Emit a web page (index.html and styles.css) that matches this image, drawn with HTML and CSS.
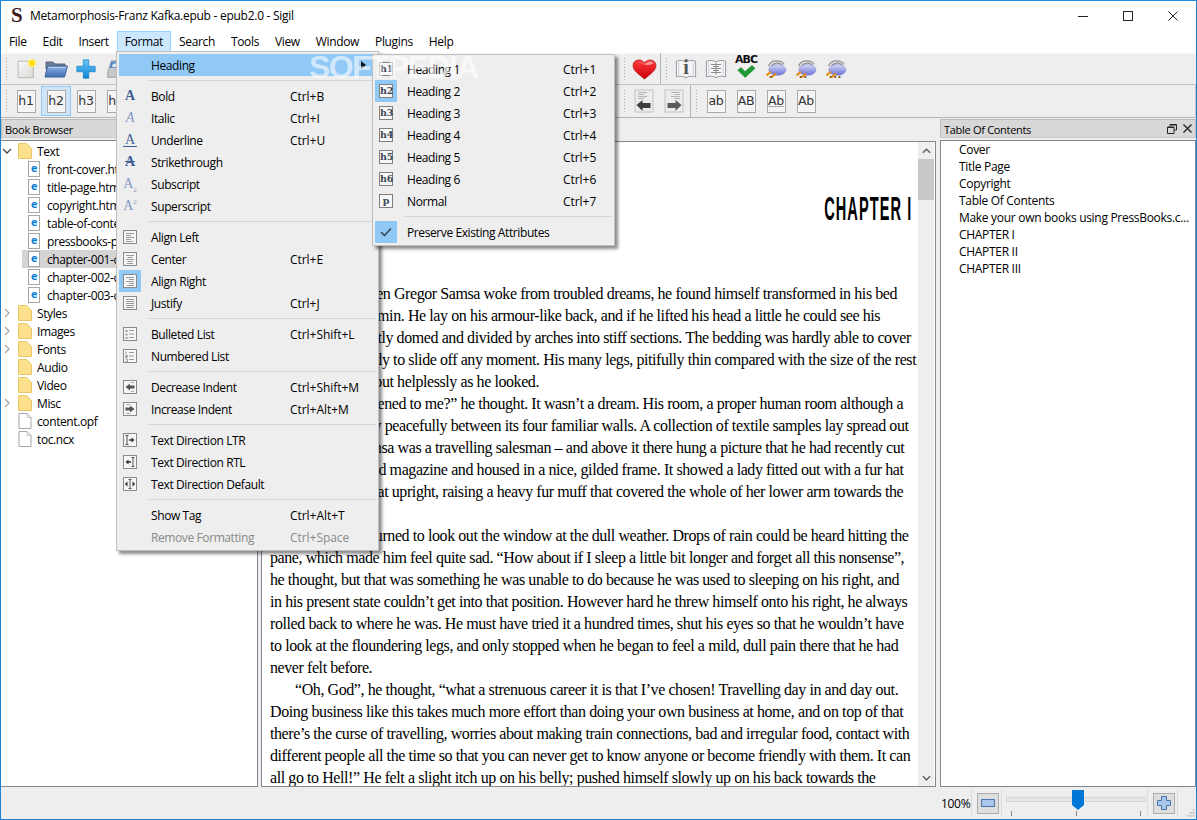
FILE: index.html
```html
<!DOCTYPE html>
<html lang="en">
<head>
    <meta charset="UTF-8">
    <title>Metamorphosis-Franz Kafka.epub - epub2.0 - Sigil</title>
    <link rel="stylesheet" href="styles.css">
</head>
<body>
<svg class="svg-defs" width="0" height="0">
    <defs>
        <linearGradient id="g-page" x1="0" y1="0" x2="1" y2="1"><stop offset="0" stop-color="#fbfbfb"/><stop offset="1" stop-color="#d8d8d4"/></linearGradient>
        <linearGradient id="g-folder" x1="0" y1="0" x2="0" y2="1"><stop offset="0" stop-color="#8fb2e2"/><stop offset="1" stop-color="#3f6fb5"/></linearGradient>
        <linearGradient id="g-plus" x1="0" y1="0" x2="0" y2="1"><stop offset="0" stop-color="#6cc6f5"/><stop offset="1" stop-color="#0a86d8"/></linearGradient>
        <linearGradient id="g-heart" x1="0" y1="0" x2="0" y2="1"><stop offset="0" stop-color="#ff3a3a"/><stop offset="1" stop-color="#c80008"/></linearGradient>
        <linearGradient id="g-oval" x1="0" y1="0" x2="0" y2="1"><stop offset="0" stop-color="#d6daf8"/><stop offset="1" stop-color="#6a70d8"/></linearGradient>

        <symbol id="box" viewBox="0 0 16 16"><rect x="1.5" y="1.5" width="13" height="13" fill="#f6f6f6" stroke="#8a8a8a"/></symbol>
        <symbol id="al-left" viewBox="0 0 16 16"><use href="#box"/><path d="M4 4.5h8M4 6.5h5M4 8.5h8M4 10.5h5M4 12.5h7" stroke="#9a9a9a" fill="none"/></symbol>
        <symbol id="al-center" viewBox="0 0 16 16"><use href="#box"/><path d="M4 4.5h8M5.5 6.5h5M4 8.5h8M5.5 10.5h5M5 12.5h6" stroke="#9a9a9a" fill="none"/></symbol>
        <symbol id="al-right" viewBox="0 0 16 16"><use href="#box"/><path d="M4 4.5h8M7 6.5h5M4 8.5h8M7 10.5h5M5 12.5h7" stroke="#9a9a9a" fill="none"/></symbol>
        <symbol id="al-just" viewBox="0 0 16 16"><use href="#box"/><path d="M4 4.5h8M4 6.5h8M4 8.5h8M4 10.5h8M4 12.5h8" stroke="#9a9a9a" fill="none"/></symbol>
        <symbol id="li-bullet" viewBox="0 0 16 16"><use href="#box"/><path d="M3.5 4h2v2h-2zM3.5 7.5h2v2h-2zM3.5 11h2v2h-2z" fill="#9a9a9a"/><path d="M7 4.5h5M7 8h5M7 11.5h5" stroke="#9a9a9a" fill="none"/></symbol>
        <symbol id="li-number" viewBox="0 0 16 16"><use href="#box"/><path d="M4 3.5v3M3.5 7.5h2v1h-2v1h2M3.5 11h2v2.5h-2" stroke="#8a8a8a" fill="none" stroke-width=".8"/><path d="M7 4.5h5M7 8h5M7 11.5h5" stroke="#9a9a9a" fill="none"/></symbol>
        <symbol id="ind-dec" viewBox="0 0 16 16"><use href="#box"/><path d="M9 3.5h3M9 12.5h3" stroke="#aaa"/><path d="M3.5 8 8 4.5V6.5h4.5v3H8v2z" fill="#555"/></symbol>
        <symbol id="ind-inc" viewBox="0 0 16 16"><use href="#box"/><path d="M4 3.5h4M4 12.5h4" stroke="#aaa"/><path d="M12.5 8 8 4.5V6.5H3.5v3H8v2z" fill="#555"/></symbol>
        <symbol id="dir-ltr" viewBox="0 0 16 16"><use href="#box"/><path d="M3.5 3.5h3M3.5 12.5h3M5 3.5v9" stroke="#555" fill="none"/><path d="M12.5 8 9.5 5.5v1.7H7v1.6h2.5v1.7z" fill="#333"/></symbol>
        <symbol id="dir-rtl" viewBox="0 0 16 16"><use href="#box"/><path d="M9.5 3.5h3M9.5 12.5h3M11 3.5v9" stroke="#555" fill="none"/><path d="M3.5 8 6.5 5.5v1.7H9v1.6H6.5v1.7z" fill="#333"/></symbol>
        <symbol id="dir-def" viewBox="0 0 16 16"><use href="#box"/><path d="M6.5 3.5h3M6.5 12.5h3M8 3.5v9" stroke="#555" fill="none"/><path d="M2.8 8 5.5 5.5v5zM13.2 8 10.5 5.5v5z" fill="#333"/></symbol>

        <symbol id="t-new" viewBox="0 0 24 24"><path d="M3.5 3.5H20v18H3.5z" fill="url(#g-page)" stroke="#b5b5b0"/><circle cx="18.5" cy="5.5" r="4.5" fill="#ffee55"/><circle cx="18.5" cy="5.5" r="2.5" fill="#ffd400"/></symbol>
        <symbol id="t-open" viewBox="0 0 24 24"><path d="M2 5h7l2 2h10v5H2z" fill="#6d7f97" stroke="#56667c"/><path d="M1 20 3.5 9h20L20.5 20z" fill="url(#g-folder)" stroke="#3f6193"/><path d="M4.5 10.5h17" stroke="#b8cff0"/></symbol>
        <symbol id="t-plus" viewBox="0 0 24 24"><path d="M9 2h6v7h7v6h-7v7H9v-7H2V9h7z" fill="url(#g-plus)" stroke="#0c78c0" stroke-width=".7"/></symbol>
        <symbol id="t-save" viewBox="0 0 24 24"><path d="M3 15 7 3h10l4 12v6H3z" fill="#c8c8c8" stroke="#999"/><path d="M7 4h10l2 7H5z" fill="#4f86c6"/><path d="M8 8c0-3 8-3 8 0v2H8z" fill="#dfe7f0"/></symbol>
        <symbol id="t-heart" viewBox="0 0 26 24"><path d="M13 22C6 16 1 13 1 8 1 4 4 2 7.500 2 10 2 12 3.500 13 5 14 3.500 16 2 18.500 2 22 2 25 4 25 8 25 13 20 16 13 22Z" fill="url(#g-heart)" stroke="#a81015" stroke-width=".6"/><path d="M4 7C5 4.500 8 4 10 5.500 14 8 19 8 22.500 5.500 21 3.500 18 3 15.500 5 14 6.500 12 6.500 10.500 5 8.500 3.500 5 4 4 7Z" fill="#ffb9b9" opacity=".75"/></symbol>
        <symbol id="t-book" viewBox="0 0 24 24"><path d="M1.500 3.500C5 2 9 2.500 12 4.500 15 2.500 19 2 22.500 3.500V20.500C19 19.500 15 19.500 12 21.500 9 19.500 5 19.500 1.500 20.500Z" fill="#f5f5f6" stroke="#8d8f9e"/><path d="M4 4.500v13.500M20 4.500v13.500" stroke="#c9cad3"/></symbol>
        <symbol id="t-check" viewBox="0 0 24 14"><path d="M3 5 6.500 2 11 6.500 18.500 0 22 3 11 13Z" fill="#1c9a33" stroke="#0f7a22" stroke-width=".5"/></symbol>
        <symbol id="t-meta" viewBox="0 0 24 22"><path d="M4 8C6 1 17 0 21 6M7 8C9 4 16 3 19 7" stroke="#8f8f98" stroke-width="1.500" fill="none"/><ellipse cx="13.500" cy="12" rx="9.500" ry="6" fill="url(#g-oval)" stroke="#7f82c8" stroke-width=".5"/><path d="M1.500 18 6.500 14M7 20 12 16" stroke="#e58a12" stroke-width="2.200" fill="none"/></symbol>
        <symbol id="t-back" viewBox="0 0 20 24"><rect x="1" y="1" width="18" height="22" fill="#ececec" stroke="#c4c4c4"/><path d="M4 3.500h9M4 5.500h6M4 7.500h9M4 9.500h6" stroke="#b5b5b5"/><path d="M2.500 16 8.500 11v3h8v5h-8v3z" fill="#3f3f3f"/></symbol>
        <symbol id="t-fwd" viewBox="0 0 20 24"><rect x="1" y="1" width="18" height="22" fill="#ececec" stroke="#c4c4c4"/><path d="M7 3.500h9M10 5.500h6M7 7.500h9M10 9.500h6" stroke="#b5b5b5"/><path d="M17.500 16 11.500 11v3h-8v5h8v3z" fill="#5a5a5a"/></symbol>

        <symbol id="folder" viewBox="0 0 14 16"><path d="M.5.5h8l5 5v10H.5z" fill="#fde08c" stroke="#e9c766"/></symbol>
        <symbol id="file" viewBox="0 0 13 16"><path d="M.5.500h8l4 4v11H.5z" fill="#fff" stroke="#a5a5a5"/><path d="M8.500.5v4h4" fill="none" stroke="#c5c5c5"/></symbol>
        <symbol id="chev-down" viewBox="0 0 10 6"><path d="M1 1l4 4 4-4" fill="none" stroke="#444" stroke-width="1.300"/></symbol>
        <symbol id="chev-up" viewBox="0 0 10 6"><path d="M1 5l4-4 4 4" fill="none" stroke="#606060" stroke-width="1.600"/></symbol>
        <symbol id="chev-right" viewBox="0 0 6 10"><path d="M1 1l4 4-4 4" fill="none" stroke="#a6a6a6" stroke-width="1.300"/></symbol>
    </defs>
</svg>

<div class="window">
    <div class="titlebar">
        <span class="app-logo">S</span>
        <span class="title-text">Metamorphosis-Franz Kafka.epub - epub2.0 - Sigil</span>
        <div class="win-buttons">
            <svg width="10" height="10" viewBox="0 0 10 10"><path d="M0 5.500h10" stroke="#222"/></svg>
            <svg width="10" height="10" viewBox="0 0 10 10"><rect x=".5" y=".5" width="9" height="9" fill="none" stroke="#222"/></svg>
            <svg width="10" height="10" viewBox="0 0 10 10"><path d="M.5.5l9 9M9.500.5l-9 9" stroke="#222"/></svg>
        </div>
    </div>

    <div class="menubar">
        <span class="menu-item">File</span>
        <span class="menu-item">Edit</span>
        <span class="menu-item">Insert</span>
        <span class="menu-item open">Format</span>
        <span class="menu-item">Search</span>
        <span class="menu-item">Tools</span>
        <span class="menu-item">View</span>
        <span class="menu-item">Window</span>
        <span class="menu-item">Plugins</span>
        <span class="menu-item">Help</span>
    </div>

    <div class="toolbar first">
        <span class="gripper"></span>
        <span class="tb-btn"><svg class="ic22"><use href="#t-new"/></svg></span>
        <span class="tb-btn"><svg class="ic24"><use href="#t-open"/></svg></span>
        <span class="tb-btn"><svg class="ic22"><use href="#t-plus"/></svg></span>
        <span class="tb-btn"><svg class="ic22"><use href="#t-save"/></svg></span>
        <span class="tb-hidden-first"></span>
        <span class="gripper"></span>
        <span class="tb-btn"><svg class="ic-heart"><use href="#t-heart"/></svg></span>
        <span class="tb-sep"></span>
        <span class="gripper"></span>
        <span class="tb-btn stack">
            <svg class="ic22"><use href="#t-book"/></svg>
            <span class="book-i">i</span>
        </span>
        <span class="tb-btn stack">
            <svg class="ic22"><use href="#t-book"/></svg>
            <svg class="book-lines" width="10" height="12" viewBox="0 0 10 12"><path d="M0 1.500h10M2 3.500h6M0 5.500h10M2 7.500h6M0 9.500h10M5 0v12" stroke="#8c8c8c" fill="none"/></svg>
        </span>
        <span class="tb-btn stack">
            <span class="abc">ABC</span>
            <svg class="abc-check"><use href="#t-check"/></svg>
        </span>
        <span class="tb-btn stack"><svg class="ic-meta"><use href="#t-meta"/></svg><span class="meta-dots">.</span></span>
        <span class="tb-btn stack"><svg class="ic-meta"><use href="#t-meta"/></svg><span class="meta-dots">..</span></span>
        <span class="tb-btn stack"><svg class="ic-meta"><use href="#t-meta"/></svg><span class="meta-dots">...</span></span>
    </div>

    <div class="toolbar second">
        <span class="gripper"></span>
        <span class="tb-btn"><span class="text-btn">h1</span></span>
        <span class="tb-btn active"><span class="text-btn">h2</span></span>
        <span class="tb-btn"><span class="text-btn">h3</span></span>
        <span class="tb-btn"><span class="text-btn">h4</span></span>
        <span class="tb-hidden-second"></span>
        <span class="gripper"></span>
        <span class="tb-btn"><svg class="ic-arrow"><use href="#t-back"/></svg></span>
        <span class="tb-btn"><svg class="ic-arrow"><use href="#t-fwd"/></svg></span>
        <span class="tb-sep"></span>
        <span class="gripper"></span>
        <span class="tb-btn"><span class="text-btn">ab</span></span>
        <span class="tb-btn"><span class="text-btn">AB</span></span>
        <span class="tb-btn"><span class="text-btn under">Ab</span></span>
        <span class="tb-btn"><span class="text-btn">Ab</span></span>
    </div>

    <div class="workspace">
        <div class="dock left">
            <div class="dock-title">Book Browser</div>
            <div class="tree">
                <div class="row"><svg class="chev"><use href="#chev-down"/></svg><svg class="folder"><use href="#folder"/></svg>Text</div>
                <div class="row child"><span class="epage">e</span>front-cover.html</div>
                <div class="row child"><span class="epage">e</span>title-page.html</div>
                <div class="row child"><span class="epage">e</span>copyright.html</div>
                <div class="row child"><span class="epage">e</span>table-of-contents.html</div>
                <div class="row child"><span class="epage">e</span>pressbooks-promo.html</div>
                <div class="row child selected"><span class="epage">e</span>chapter-001-chapter-i.html</div>
                <div class="row child"><span class="epage">e</span>chapter-002-chapter-ii.html</div>
                <div class="row child"><span class="epage">e</span>chapter-003-chapter-iii.html</div>
                <div class="row"><svg class="chev side"><use href="#chev-right"/></svg><svg class="folder"><use href="#folder"/></svg>Styles</div>
                <div class="row"><svg class="chev side"><use href="#chev-right"/></svg><svg class="folder"><use href="#folder"/></svg>Images</div>
                <div class="row"><svg class="chev side"><use href="#chev-right"/></svg><svg class="folder"><use href="#folder"/></svg>Fonts</div>
                <div class="row"><span class="chev"></span><svg class="folder"><use href="#folder"/></svg>Audio</div>
                <div class="row"><span class="chev"></span><svg class="folder"><use href="#folder"/></svg>Video</div>
                <div class="row"><svg class="chev side"><use href="#chev-right"/></svg><svg class="folder"><use href="#folder"/></svg>Misc</div>
                <div class="row"><span class="chev"></span><svg class="folder"><use href="#file"/></svg>content.opf</div>
                <div class="row"><span class="chev"></span><svg class="folder"><use href="#file"/></svg>toc.ncx</div>
            </div>
        </div>

        <div class="center">
            <div class="tab-strip"></div>
            <div class="editor">
                <div class="page">
                    <h1 class="chapter"><span>CHAPTER I</span></h1>
                    <p class="para lead">One morning, when Gregor Samsa woke from troubled dreams, he found himself transformed in his bed<br>
into a horrible vermin. He lay on his armour-like back, and if he lifted his head a little he could see his<br>
brown belly, slightly domed and divided by arches into stiff sections. The bedding was hardly able to cover<br>
it and seemed ready to slide off any moment. His many legs, pitifully thin compared with the size of the rest<br>
of him, waved about helplessly as he looked.</p>
                    <p class="para">“What’s happened to me?” he thought. It wasn’t a dream. His room, a proper human room although a<br>
little too small, lay peacefully between its four familiar walls. A collection of textile samples lay spread out<br>
on the table – Samsa was a travelling salesman – and above it there hung a picture that he had recently cut<br>
out of an illustrated magazine and housed in a nice, gilded frame. It showed a lady fitted out with a fur hat<br>
and fur boa who sat upright, raising a heavy fur muff that covered the whole of her lower arm towards the<br>
viewer.</p>
                    <p class="para">Gregor then turned to look out the window at the dull weather. Drops of rain could be heard hitting the<br>
pane, which made him feel quite sad. “How about if I sleep a little bit longer and forget all this nonsense”,<br>
he thought, but that was something he was unable to do because he was used to sleeping on his right, and<br>
in his present state couldn’t get into that position. However hard he threw himself onto his right, he always<br>
rolled back to where he was. He must have tried it a hundred times, shut his eyes so that he wouldn’t have<br>
to look at the floundering legs, and only stopped when he began to feel a mild, dull pain there that he had<br>
never felt before.</p>
                    <p class="para">“Oh, God”, he thought, “what a strenuous career it is that I’ve chosen! Travelling day in and day out.<br>
Doing business like this takes much more effort than doing your own business at home, and on top of that<br>
there’s the curse of travelling, worries about making train connections, bad and irregular food, contact with<br>
different people all the time so that you can never get to know anyone or become friendly with them. It can<br>
all go to Hell!” He felt a slight itch up on his belly; pushed himself slowly up on his back towards the</p>
                </div>
                <div class="scrollbar">
                    <svg class="sb-arrow"><use href="#chev-up"/></svg>
                    <div class="sb-thumb"></div>
                    <svg class="sb-arrow end"><use href="#chev-down"/></svg>
                </div>
            </div>
        </div>

        <div class="dock right">
            <div class="dock-title">
                <span>Table Of Contents</span>
                <span class="dock-btns">
                    <svg width="10" height="10" viewBox="0 0 10 10"><path d="M3 2.500V.5h6.500V6H7.500M.5 3h6.500v6.500H.5z" fill="none" stroke="#222"/><path d="M1 3.500h5.500M3.500 1H9" stroke="#222"/></svg>
                    <svg width="9" height="9" viewBox="0 0 9 9"><path d="M.5.5l8 8M8.500.5l-8 8" stroke="#222" stroke-width="1.300"/></svg>
                </span>
            </div>
            <div class="toc">
                <div>Cover</div>
                <div>Title Page</div>
                <div>Copyright</div>
                <div>Table Of Contents</div>
                <div>Make your own books using PressBooks.c...</div>
                <div>CHAPTER I</div>
                <div>CHAPTER II</div>
                <div>CHAPTER III</div>
            </div>
        </div>
    </div>

    <div class="statusbar">
        <span class="zoom-label">100%</span>
        <span class="st-sep"></span>
        <span class="zoom-btn"><svg width="14" height="8" viewBox="0 0 14 8"><rect x=".5" y=".5" width="13" height="7" fill="#a9c7ea" stroke="#4a76ad"/></svg></span>
        <span class="st-sep"></span>
        <div class="slider">
            <div class="groove"></div>
            <svg class="handle" width="12" height="20" viewBox="0 0 12 20"><path d="M0 0h12v15l-6 5-6-5z" fill="#0078d7"/></svg>
            <div class="ticks"><i></i><i></i><i></i></div>
        </div>
        <span class="st-sep"></span>
        <span class="zoom-btn"><svg width="14" height="14" viewBox="0 0 14 14"><path d="M4.500.5h5v4h4v5h-4v4h-5v-4h-4v-5h4z" fill="#a9c7ea" stroke="#4a76ad"/></svg></span>
        <span class="st-sep"></span>
        <svg class="grip" width="10" height="10" viewBox="0 0 10 10"><path d="M7 1h2v2H7zM4 4h2v2H4zM7 4h2v2H7zM1 7h2v2H1zM4 7h2v2H4zM7 7h2v2H7z" fill="#c4c4c4"/></svg>
    </div>

    <div class="popup format-menu">
        <div class="mi current"><span class="mi-ic"></span><span class="mi-label">Heading</span><span class="mi-arrow"></span></div>
        <div class="msep"></div>
        <div class="mi"><span class="mi-ic"><b class="fa">A</b></span><span class="mi-label">Bold</span><span class="mi-key">Ctrl+B</span></div>
        <div class="mi"><span class="mi-ic"><i class="fa light">A</i></span><span class="mi-label">Italic</span><span class="mi-key">Ctrl+I</span></div>
        <div class="mi"><span class="mi-ic"><span class="fa und">A</span></span><span class="mi-label">Underline</span><span class="mi-key">Ctrl+U</span></div>
        <div class="mi"><span class="mi-ic"><b class="fa strike">A</b></span><span class="mi-label">Strikethrough</span></div>
        <div class="mi"><span class="mi-ic"><span class="fa light">A<sub>2</sub></span></span><span class="mi-label">Subscript</span></div>
        <div class="mi"><span class="mi-ic"><span class="fa light">A<sup>2</sup></span></span><span class="mi-label">Superscript</span></div>
        <div class="msep"></div>
        <div class="mi"><span class="mi-ic"><svg class="ic16"><use href="#al-left"/></svg></span><span class="mi-label">Align Left</span></div>
        <div class="mi"><span class="mi-ic"><svg class="ic16"><use href="#al-center"/></svg></span><span class="mi-label">Center</span><span class="mi-key">Ctrl+E</span></div>
        <div class="mi"><span class="mi-ic on"><svg class="ic16"><use href="#al-right"/></svg></span><span class="mi-label">Align Right</span></div>
        <div class="mi"><span class="mi-ic"><svg class="ic16"><use href="#al-just"/></svg></span><span class="mi-label">Justify</span><span class="mi-key">Ctrl+J</span></div>
        <div class="msep"></div>
        <div class="mi"><span class="mi-ic"><svg class="ic16"><use href="#li-bullet"/></svg></span><span class="mi-label">Bulleted List</span><span class="mi-key">Ctrl+Shift+L</span></div>
        <div class="mi"><span class="mi-ic"><svg class="ic16"><use href="#li-number"/></svg></span><span class="mi-label">Numbered List</span></div>
        <div class="msep"></div>
        <div class="mi"><span class="mi-ic"><svg class="ic16"><use href="#ind-dec"/></svg></span><span class="mi-label">Decrease Indent</span><span class="mi-key">Ctrl+Shift+M</span></div>
        <div class="mi"><span class="mi-ic"><svg class="ic16"><use href="#ind-inc"/></svg></span><span class="mi-label">Increase Indent</span><span class="mi-key">Ctrl+Alt+M</span></div>
        <div class="msep"></div>
        <div class="mi"><span class="mi-ic"><svg class="ic16"><use href="#dir-ltr"/></svg></span><span class="mi-label">Text Direction LTR</span></div>
        <div class="mi"><span class="mi-ic"><svg class="ic16"><use href="#dir-rtl"/></svg></span><span class="mi-label">Text Direction RTL</span></div>
        <div class="mi"><span class="mi-ic"><svg class="ic16"><use href="#dir-def"/></svg></span><span class="mi-label">Text Direction Default</span></div>
        <div class="msep"></div>
        <div class="mi"><span class="mi-ic"></span><span class="mi-label">Show Tag</span><span class="mi-key">Ctrl+Alt+T</span></div>
        <div class="mi disabled"><span class="mi-ic"></span><span class="mi-label">Remove Formatting</span><span class="mi-key">Ctrl+Space</span></div>
    </div>

    <div class="popup heading-menu">
        <div class="mi"><span class="mi-ic"><span class="hbox">h1</span></span><span class="mi-label">Heading 1</span><span class="mi-key">Ctrl+1</span></div>
        <div class="mi"><span class="mi-ic on"><span class="hbox">h2</span></span><span class="mi-label">Heading 2</span><span class="mi-key">Ctrl+2</span></div>
        <div class="mi"><span class="mi-ic"><span class="hbox">h3</span></span><span class="mi-label">Heading 3</span><span class="mi-key">Ctrl+3</span></div>
        <div class="mi"><span class="mi-ic"><span class="hbox">h4</span></span><span class="mi-label">Heading 4</span><span class="mi-key">Ctrl+4</span></div>
        <div class="mi"><span class="mi-ic"><span class="hbox">h5</span></span><span class="mi-label">Heading 5</span><span class="mi-key">Ctrl+5</span></div>
        <div class="mi"><span class="mi-ic"><span class="hbox">h6</span></span><span class="mi-label">Heading 6</span><span class="mi-key">Ctrl+6</span></div>
        <div class="mi"><span class="mi-ic"><span class="hbox">p</span></span><span class="mi-label">Normal</span><span class="mi-key">Ctrl+7</span></div>
        <div class="msep"></div>
        <div class="mi"><span class="mi-ic on"><svg width="12" height="10" viewBox="0 0 12 10"><path d="M1 5l3.500 3.500L11 1.500" fill="none" stroke="#3a3f46" stroke-width="1.500"/></svg></span><span class="mi-label">Preserve Existing Attributes</span></div>
    </div>

    <div class="watermark">SOFTPEDIA</div>
</div>
</body>
</html>
```

FILE: styles.css
```css
* {
    box-sizing: border-box;
}
html, body {
    margin: 0;
    height: 100%;
    overflow: hidden;
}
body {
    font-family: "Open Sans", "Noto Sans", sans-serif;
    font-size: 12px;
    letter-spacing: -0.3px;
    color: #000;
    background: #eee;
}
.svg-defs {
    position: absolute;
}
.window {
    position: relative;
    width: 1197px;
    height: 820px;
    border: 1px solid #1783d6;
    border-top-color: #1b8ae0;
    background: #eee;
    display: flex;
    flex-direction: column;
    overflow: hidden;
}

/* title + menu */
.titlebar {
    height: 29px;
    background: #fff;
    display: flex;
    align-items: center;
    padding-left: 9px;
    flex: none;
}
.app-logo {
    font-family: "Liberation Serif", serif;
    font-weight: bold;
    font-size: 21px;
    color: #3c1a1c;
    width: 20px;
    padding-left: 1px;
}
.title-text {
    letter-spacing: -0.27px;
}
.win-buttons {
    margin-left: auto;
    display: flex;
    gap: 35px;
    padding-right: 18px;
}
.menubar {
    height: 23px;
    background: #fff;
    display: flex;
    align-items: stretch;
    flex: none;
    padding: 1px 0 1px 0;
}
.menu-item {
    padding: 1px 7px 0;
    line-height: 18px;
    letter-spacing: -0.35px;
    border: 1px solid transparent;
}
.menu-item.open {
    background: #cce8ff;
    border-color: #99d1ff;
}

/* toolbars */
.toolbar {
    display: flex;
    align-items: center;
    flex: none;
    padding-left: 4px;
}
.toolbar.first {
    height: 31px;
    border-top: 1px solid #f8f8f8;
}
.toolbar.second {
    height: 34px;
    border-top: 1px solid #c4c4c4;
    border-bottom: 1px solid #b4b4b4;
    border-right: 1px solid #c4c4c4;
}
.gripper {
    width: 4px;
    height: 24px;
    margin-right: 2px;
    flex: none;
    background-image: radial-gradient(circle, #a8a8a8 0.8px, transparent 1px);
    background-size: 3px 3px;
}
.tb-btn {
    position: relative;
    width: 30px;
    height: 30px;
    flex: none;
    display: flex;
    align-items: center;
    justify-content: center;
}
.tb-btn.active {
    background: #cfe5f7;
    border: 1px solid #90c8f6;
}
.tb-hidden-first,
.tb-hidden-second {
    width: 492px;
    flex: none;
}
.tb-sep {
    width: 1px;
    height: 32px;
    margin: 0 4px 0 1px;
    background: #b4b4b4;
    flex: none;
}
.ic22 {
    width: 22px;
    height: 22px;
}
.ic24 {
    width: 24px;
    height: 24px;
}
.ic-heart {
    width: 25px;
    height: 23px;
}
.ic-arrow {
    width: 20px;
    height: 24px;
}
.ic-meta {
    width: 22px;
    height: 20px;
}
.text-btn {
    width: 19px;
    height: 23px;
    border: 1px solid #aaa;
    background: #f4f4f4;
    font-family: "DejaVu Sans", sans-serif;
    font-size: 12.5px;
    letter-spacing: -0.3px;
    line-height: 20px;
    text-align: center;
    color: #333;
    box-shadow: 0 0 0 1px #f8f8f8 inset;
}
.text-btn.under {
    text-decoration: underline;
    text-decoration-color: #aaa;
}
.book-i {
    position: absolute;
    left: 0;
    right: 0;
    top: 2px;
    text-align: center;
    font-family: "Liberation Serif", serif;
    font-weight: bold;
    font-size: 20px;
    color: #555;
}
.book-lines {
    position: absolute;
    left: 10px;
    top: 9px;
}
.abc {
    position: absolute;
    left: 0;
    right: 0;
    top: -1px;
    text-align: center;
    font-family: "DejaVu Sans", sans-serif;
    font-weight: bold;
    font-size: 11px;
    letter-spacing: -1px;
    color: #111;
}
.abc-check {
    position: absolute;
    left: 4px;
    top: 11px;
    width: 22px;
    height: 14px;
}
.meta-dots {
    position: absolute;
    left: 8px;
    top: 11px;
    font-weight: bold;
    font-size: 12px;
    letter-spacing: 1px;
    color: #7a4a00;
}

/* docks */
.workspace {
    flex: 1;
    min-height: 0;
    display: flex;
}
.dock {
    display: flex;
    flex-direction: column;
    flex: none;
}
.dock.left {
    width: 257px;
}
.dock.right {
    width: 256px;
    margin-left: 4px;
}
.dock-title {
    height: 19px;
    margin-top: 1px;
    background: #d8d8d8;
    border: 1px solid #bbb;
    border-bottom-color: #ccc;
    padding: 0 3px;
    font-size: 11px;
    line-height: 19px;
    display: flex;
    justify-content: space-between;
    flex: none;
}
.dock-btns {
    display: flex;
    align-items: center;
    gap: 6px;
}
.tree, .toc {
    flex: 1;
    background: #fff;
    border: 1px solid #828790;
    margin-top: 2px;
    min-height: 0;
    overflow: hidden;
    letter-spacing: -0.4px;
}
.tree {
    border-left: 0;
    padding-top: 1px;
}
.row {
    height: 18px;
    display: flex;
    align-items: center;
    white-space: nowrap;
}
.row.child {
    margin-left: 21px;
}
.row.selected {
    background: #d4d4d4;
}
.chev {
    width: 10px;
    height: 6px;
    margin: 0 6px 0 1px;
    flex: none;
}
.chev.side {
    height: 10px;
}
.folder {
    width: 14px;
    height: 16px;
    margin-right: 5px;
    flex: none;
}
.epage {
    width: 12px;
    height: 16px;
    margin: 0 7px 0 6px;
    flex: none;
    border: 1px solid #a5a5a5;
    background: #fff;
    color: #0f7fd6;
    font-weight: bold;
    font-size: 11px;
    line-height: 12px;
    text-align: center;
}
.toc {
    padding: 0 0 0 18px;
    line-height: 17px;
    letter-spacing: -0.3px;
    white-space: nowrap;
}

/* editor */
.center {
    width: 675px;
    margin-left: 3px;
    flex: none;
    display: flex;
    flex-direction: column;
    min-height: 0;
}
.tab-strip {
    height: 23px;
    flex: none;
}
.editor {
    flex: 1;
    min-height: 0;
    display: flex;
    background: #fff;
    border: 1px solid #828790;
    overflow: hidden;
}
.page {
    flex: 1;
    min-width: 0;
    padding: 0 8px;
    overflow: hidden;
    font-family: "Liberation Serif", serif;
    font-size: 16px;
    letter-spacing: -0.42px;
    line-height: 22px;
    white-space: nowrap;
}
.chapter {
    margin: 47px -2px 54px 0;
    height: 40px;
    font-family: "Liberation Sans", sans-serif;
    font-size: 33px;
    font-weight: bold;
    line-height: 40px;
    letter-spacing: 2.5px;
    text-align: right;
}
.chapter span {
    display: inline-block;
    transform: scaleX(0.44);
    transform-origin: right center;
}
.para {
    margin: 0;
    text-indent: 25px;
}
.para.lead {
    text-indent: 0;
}
.scrollbar {
    width: 16px;
    margin-right: 1px;
    flex: none;
    background: #eee;
    display: flex;
    flex-direction: column;
    align-items: center;
    padding-top: 6px;
}
.sb-arrow {
    width: 9px;
    height: 6px;
    flex: none;
}
.sb-arrow.end {
    margin-top: auto;
    margin-bottom: 5px;
}
.sb-thumb {
    width: 100%;
    height: 41px;
    margin-top: 5px;
    background: #c9c9c9;
}

/* status bar */
.statusbar {
    height: 32px;
    flex: none;
    display: flex;
    align-items: center;
    padding-left: 940px;
    position: relative;
}
.zoom-label {
    width: 32px;
    text-align: left;
}
.st-sep {
    width: 1px;
    height: 26px;
    background: #dcdcdc;
    flex: none;
}
.zoom-btn {
    width: 22px;
    height: 21px;
    margin: 0 2px 0 5px;
    background: #dedede;
    border: 1px solid #adadad;
    display: flex;
    align-items: center;
    justify-content: center;
    flex: none;
}
.slider {
    position: relative;
    width: 145px;
    height: 28px;
    flex: none;
}
.groove {
    position: absolute;
    left: 4px;
    right: 1px;
    top: 8px;
    height: 5px;
    background: #e6e6e6;
    border: 1px solid #d6d6d6;
}
.handle {
    position: absolute;
    left: 70px;
    top: 1px;
}
.ticks {
    position: absolute;
    left: 9px;
    right: 6px;
    top: 22px;
    display: flex;
    justify-content: space-between;
}
.ticks i {
    width: 1px;
    height: 5px;
    background: #888;
}
.grip {
    margin-left: 8px;
    margin-top: 20px;
}

/* popup menus */
.popup {
    position: absolute;
    background: #eee;
    border: 1px solid #bfbfbf;
    box-shadow: 3px 3px 3px rgba(0, 0, 0, 0.45);
    padding: 2px;
    white-space: nowrap;
}
.format-menu {
    left: 115px;
    top: 50px;
    width: 263px;
    height: 500px;
}
.heading-menu {
    left: 371px;
    top: 53px;
    width: 243px;
    height: 192px;
    padding-top: 3px;
}
.mi {
    height: 22px;
    display: flex;
    align-items: center;
    position: relative;
}
.mi.current {
    background: #90c8f6;
}
.mi.disabled {
    color: #8a8a8a;
}
.mi-ic {
    width: 22px;
    height: 22px;
    display: flex;
    align-items: center;
    justify-content: center;
    flex: none;
}
.mi-ic.on {
    background: #90c8f6;
}
.mi-label {
    margin-left: 10px;
    letter-spacing: -0.4px;
}
.mi-key {
    position: absolute;
    left: 171px;
    letter-spacing: -0.05px;
}
.heading-menu .mi-key {
    left: 188px;
}
.mi-arrow {
    position: absolute;
    right: 10px;
    width: 0;
    height: 0;
    border-left: 5px solid #111;
    border-top: 4px solid transparent;
    border-bottom: 4px solid transparent;
}
.msep {
    height: 9px;
    margin-left: 30px;
    background: linear-gradient(#d4d4d4, #d4d4d4) 0 4px / 100% 1px no-repeat;
}
.ic16 {
    width: 16px;
    height: 16px;
}
.fa {
    font-family: "Liberation Serif", serif;
    font-size: 14px;
    letter-spacing: 0;
    color: #3f5f93;
    line-height: 16px;
}
.fa.light {
    color: #7f99c4;
}
.fa.und {
    border-bottom: 1px solid #3f5f93;
    padding: 0 2px;
    line-height: 13px;
}
.fa.strike {
    text-decoration: line-through;
}
.fa sub, .fa sup {
    font-size: 7px;
    line-height: 0;
}
.hbox {
    width: 14px;
    height: 14px;
    border: 1px solid #808080;
    background: #f8f8f8;
    font-family: "DejaVu Serif", serif;
    font-weight: bold;
    font-size: 9.5px;
    letter-spacing: -0.2px;
    line-height: 12px;
    text-align: center;
    color: #3c4a58;
}
.watermark {
    position: absolute;
    left: 308px;
    top: 48px;
    font-family: "Liberation Sans", sans-serif;
    font-weight: bold;
    font-size: 32px;
    letter-spacing: -1.6px;
    color: rgba(255, 255, 255, 0.6);
    pointer-events: none;
}
```
